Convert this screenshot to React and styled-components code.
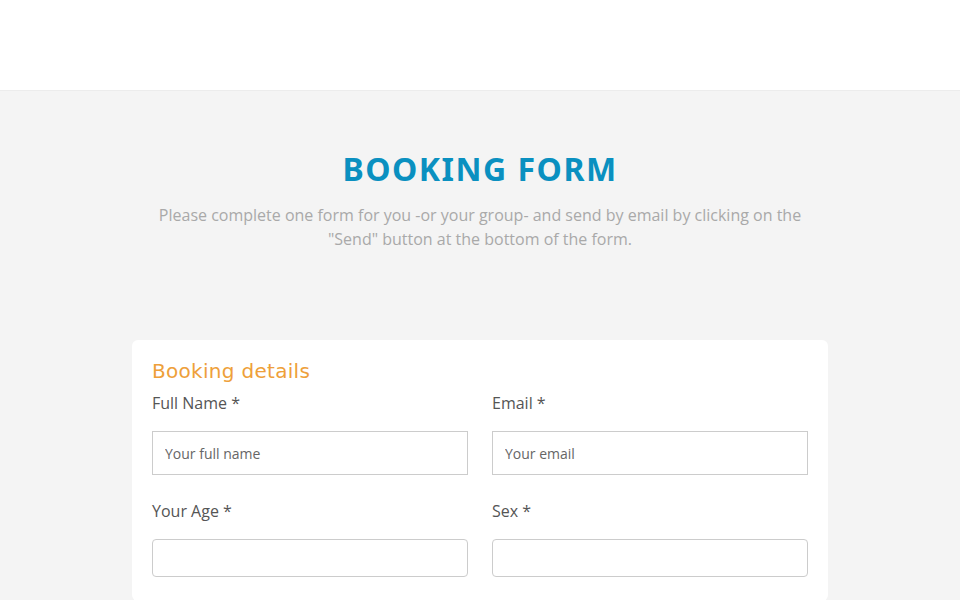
import React from "react";
import styled, { createGlobalStyle } from "styled-components";

const Global = createGlobalStyle`
  html, body { margin: 0; padding: 0; }
  body { background: #f4f4f4; font-family: "Open Sans", "Liberation Sans", sans-serif; }
  * { box-sizing: border-box; }
`;

const Header = styled.header`
  height: 91px;
  background: #fff;
  border-bottom: 1px solid #ececec;
`;

const Main = styled.main`
  background: #f4f4f4;
  padding-top: 58px;
  display: flex;
  flex-direction: column;
  align-items: center;
`;

const Title = styled.h1`
  margin: 0;
  font-family: "Noto Sans", "Open Sans", sans-serif;
  font-weight: 700;
  font-size: 32px;
  line-height: 40px;
  letter-spacing: 1.5px;
  color: #0a90c0;
`;

const Intro = styled.p`
  margin: 14px 0 0;
  width: 660px;
  text-align: center;
  font-size: 16px;
  line-height: 24px;
  color: #a9a9a9;
`;

const Card = styled.section`
  margin-top: 89px;
  width: 696px;
  background: #fff;
  border-radius: 6px;
  padding: 16px 20px 24px;
`;

const CardTitle = styled.h2`
  margin: 0 0 5px;
  font-family: "DejaVu Sans", "Noto Sans", sans-serif;
  font-weight: 400;
  font-size: 20px;
  line-height: 30px;
  letter-spacing: 0.3px;
  color: #eea03a;
`;

const Grid = styled.div`
  display: grid;
  grid-template-columns: 1fr 1fr;
  column-gap: 24px;
  row-gap: 24px;
`;

const Field = styled.div`
  display: flex;
  flex-direction: column;
`;

const Label = styled.label`
  font-size: 16px;
  line-height: 24px;
  color: #555;
  margin-bottom: 16px;
`;

const Input = styled.input`
  height: ${(p) => (p.$tall ? "44px" : "38px")};
  border: 1px solid #ccc;
  border-radius: ${(p) => (p.$round ? "4px" : "0")};
  padding: 0 12px;
  font-family: "Open Sans", sans-serif;
  font-size: 14px;
  color: #555;
  background: #fff;
  outline: none;
  &::placeholder { color: #666; }
`;

export default function App() {
  return (
    <>
      <Global />
      <Header />
      <Main>
        <Title>BOOKING FORM</Title>
        <Intro>
          Please complete one form for you -or your group- and send by email by clicking on the
          "Send" button at the bottom of the form.
        </Intro>
        <Card>
          <CardTitle>Booking details</CardTitle>
          <Grid>
            <Field>
              <Label>Full Name *</Label>
              <Input $tall placeholder="Your full name" />
            </Field>
            <Field>
              <Label>Email *</Label>
              <Input $tall placeholder="Your email" />
            </Field>
            <Field>
              <Label>Your Age *</Label>
              <Input $round />
            </Field>
            <Field>
              <Label>Sex *</Label>
              <Input $round />
            </Field>
          </Grid>
        </Card>
      </Main>
    </>
  );
}
